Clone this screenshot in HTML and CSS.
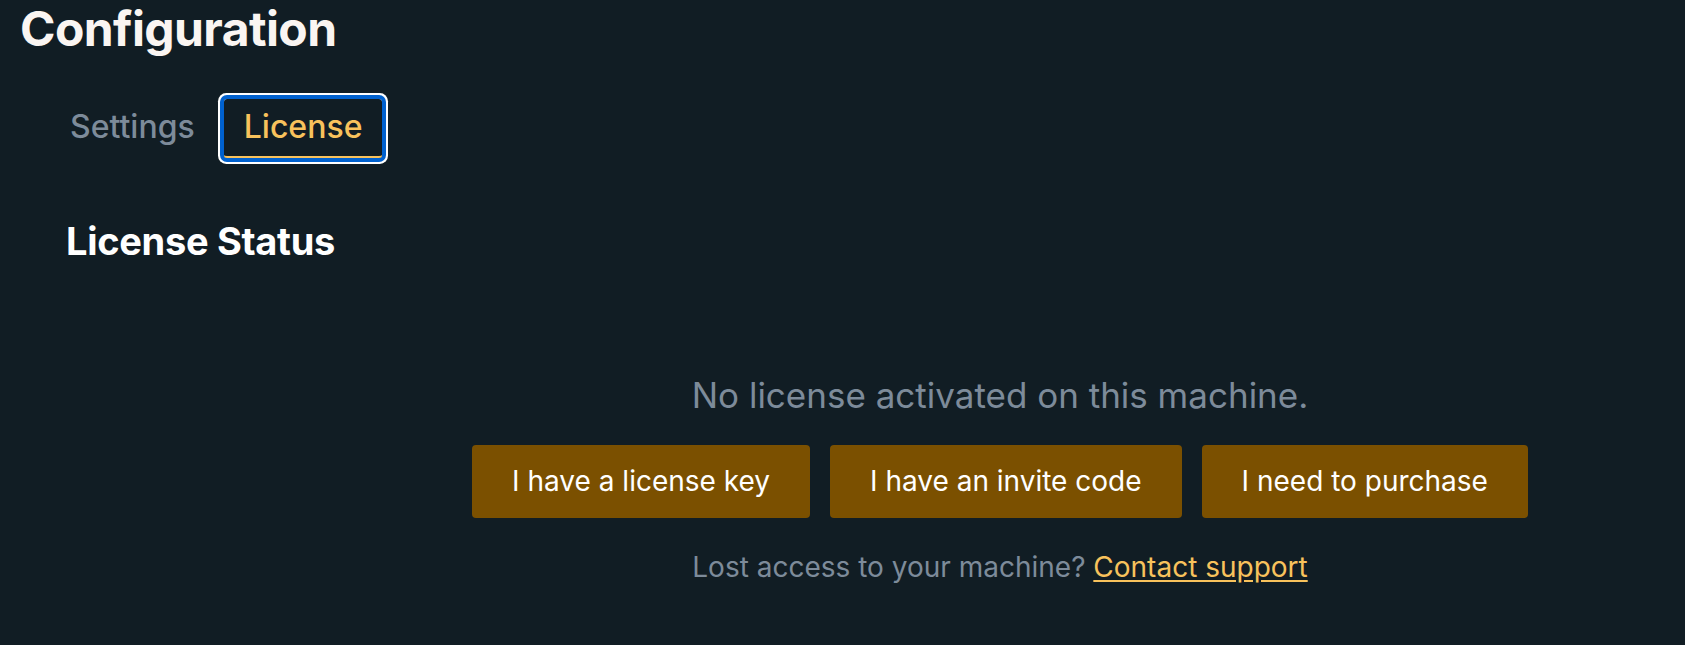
FILE: index.html
```html
<!DOCTYPE html>
<html lang="en">
<head>
<meta charset="utf-8">
<title>Configuration</title>
<link rel="stylesheet" href="styles.css">
</head>
<body>
<main class="page">
  <h1 class="title">Configuration</h1>
  <nav class="tabs">
    <button class="tab">Settings</button>
    <button class="tab tab-active">License</button>
  </nav>
  <section class="panel">
    <h2 class="panel-title">License Status</h2>
    <div class="status">
      <p class="status-text">No license activated on this machine.</p>
      <div class="actions">
        <button class="action">I have a license key</button>
        <button class="action">I have an invite code</button>
        <button class="action">I need to purchase</button>
      </div>
      <p class="help">Lost access to your machine? <a class="help-link" href="#">Contact support</a></p>
    </div>
  </section>
</main>
</body>
</html>
```

FILE: styles.css
```css
html, body {
  margin: 0;
  padding: 0;
  background: #111d24;
}

body {
  font-family: Inter, "Noto Sans", sans-serif;
  color: #faf5f2;
}

.page {
  padding: 0 20px;
}

.title {
  margin: 0;
  padding-top: 2px;
  font-size: 48px;
  line-height: 54px;
  font-weight: 700;
  letter-spacing: -0.6px;
  color: #faf5f2;
}

.tabs {
  display: flex;
  gap: 9px;
  margin-top: 43px;
  padding-left: 30px;
}

.tab {
  font-family: inherit;
  font-size: 32px;
  font-weight: 500;
  line-height: 40px;
  padding: 8px 20px 9px;
  background: transparent;
  border: 0;
  border-bottom: 2px solid transparent;
  color: #7d8b9a;
  border-radius: 3px;
  cursor: pointer;
}

.tab-active {
  color: #f8c25c;
  border-bottom-color: #f8c25c;
  box-shadow: 0 0 0 4px #0061cf, 0 0 0 6px #ffffff;
}

.panel {
  padding-left: 46px;
}

.panel-title {
  margin: 60px 0 0;
  font-size: 38px;
  line-height: 46px;
  font-weight: 700;
  letter-spacing: -0.3px;
  color: #ffffff;
}

.status {
  margin-left: 269px;
  display: flex;
  flex-direction: column;
  align-items: center;
  padding-top: 110px;
}

.status-text {
  margin: 0;
  font-size: 35px;
  line-height: 42px;
  color: #7d8b9a;
}

.actions {
  display: flex;
  gap: 20px;
  margin-top: 29px;
}

.action {
  font-family: inherit;
  font-size: 28px;
  line-height: 34px;
  font-weight: 400;
  color: #ffffff;
  background: #7b5000;
  border: 0;
  border-radius: 4px;
  padding: 19px 40px 20px;
  cursor: pointer;
}

.help {
  margin: 32px 0 0;
  font-size: 28px;
  line-height: 34px;
  color: #7d8b9a;
}

.help-link {
  color: #f8c25c;
  text-decoration: underline;
  text-underline-offset: 3px;
}
```
